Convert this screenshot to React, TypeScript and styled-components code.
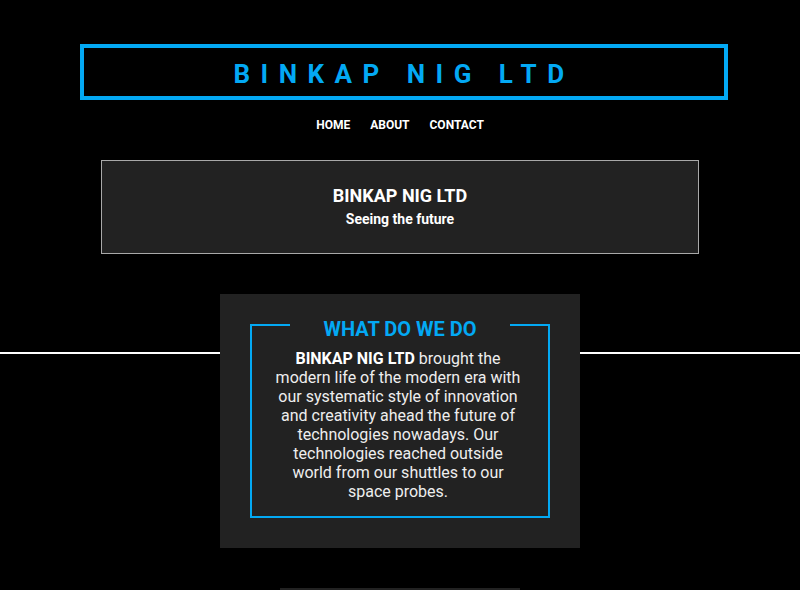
import React from "react";
import styled, { createGlobalStyle } from "styled-components";

const BLUE = "#03a9f4";

const GlobalStyle = createGlobalStyle`
  html, body {
    margin: 0;
    padding: 0;
    background: #000;
  }
  body {
    font-family: Roboto, "Liberation Sans", Arial, sans-serif;
    color: #fff;
  }
  * { box-sizing: border-box; }
`;

const Page = styled.div`
  padding-top: 44px;
`;

const TitleBox = styled.header`
  width: 648px;
  margin-left: 80px;
  border: 4px solid ${BLUE};
  padding: 11px 0 7px;
  text-align: center;
`;

const Brand = styled.h1`
  margin: 0;
  font-size: 26px;
  line-height: 30px;
  font-weight: 700;
  letter-spacing: 10.5px;
  color: ${BLUE};
`;

const Nav = styled.nav`
  display: flex;
  justify-content: center;
  gap: 20px;
  margin-top: 18px;
`;

const NavLink = styled.a`
  color: #fff;
  text-decoration: none;
  font-size: 12px;
  line-height: 14px;
  font-weight: 700;
  text-transform: uppercase;
`;

const Hero = styled.section`
  width: 598px;
  margin: 28px auto 0;
  padding: 24px 25px 26px;
  background: #222;
  border: 1px solid #a9a9a9;
  text-align: center;
`;

const HeroTitle = styled.h2`
  margin: 0 0 5px;
  font-size: 18px;
  line-height: 21px;
  font-weight: 700;
  color: #fff;
`;

const HeroSub = styled.p`
  margin: 0;
  font-size: 14px;
  line-height: 16px;
  font-weight: 700;
  color: #fff;
`;

const Band = styled.div`
  display: flex;
  align-items: flex-start;
  margin-top: 40px;
`;

const Rule = styled.div`
  flex: 1;
  height: 2px;
  margin-top: 58px;
  background: #fff;
`;

const InfoBox = styled.section`
  width: 360px;
  flex: none;
  background: #222;
  padding: 15px 30px 30px;
`;

const Frame = styled.fieldset`
  margin: 0;
  border: 2px solid ${BLUE};
  padding: 8px 22px 15px;
  text-align: center;
  min-width: 0;
`;

const FrameTitle = styled.legend`
  margin: 0 auto;
  width: 220px;
  padding: 8px 0 0;
  text-align: center;
  font-size: 20px;
  font-weight: 700;
  color: ${BLUE};
`;

const Body = styled.p`
  margin: 0;
  padding-right: 4px;
  font-size: 16px;
  line-height: 19px;
  color: #eee;
`;

const Strong = styled.strong`
  color: #fff;
  font-weight: 700;
`;

const NextBox = styled.section`
  width: 240px;
  min-height: 120px;
  margin: 40px auto 0;
  background: #222;
`;

export default function App() {
  return (
    <>
      <GlobalStyle />
      <Page>
        <TitleBox>
          <Brand>BINKAP NIG LTD</Brand>
        </TitleBox>
        <Nav>
          <NavLink href="#">Home</NavLink>
          <NavLink href="#">About</NavLink>
          <NavLink href="#">Contact</NavLink>
        </Nav>
        <Hero>
          <HeroTitle>BINKAP NIG LTD</HeroTitle>
          <HeroSub>Seeing the future</HeroSub>
        </Hero>
        <Band>
          <Rule />
          <InfoBox>
            <Frame>
              <FrameTitle>WHAT DO WE DO</FrameTitle>
              <Body>
                <Strong>BINKAP NIG LTD</Strong> brought the modern life of the
                modern era with our systematic style of innovation and creativity
                ahead the future of technologies nowadays. Our technologies
                reached outside world from our shuttles to our space probes.
              </Body>
            </Frame>
          </InfoBox>
          <Rule />
        </Band>
        <NextBox />
      </Page>
    </>
  );
}
